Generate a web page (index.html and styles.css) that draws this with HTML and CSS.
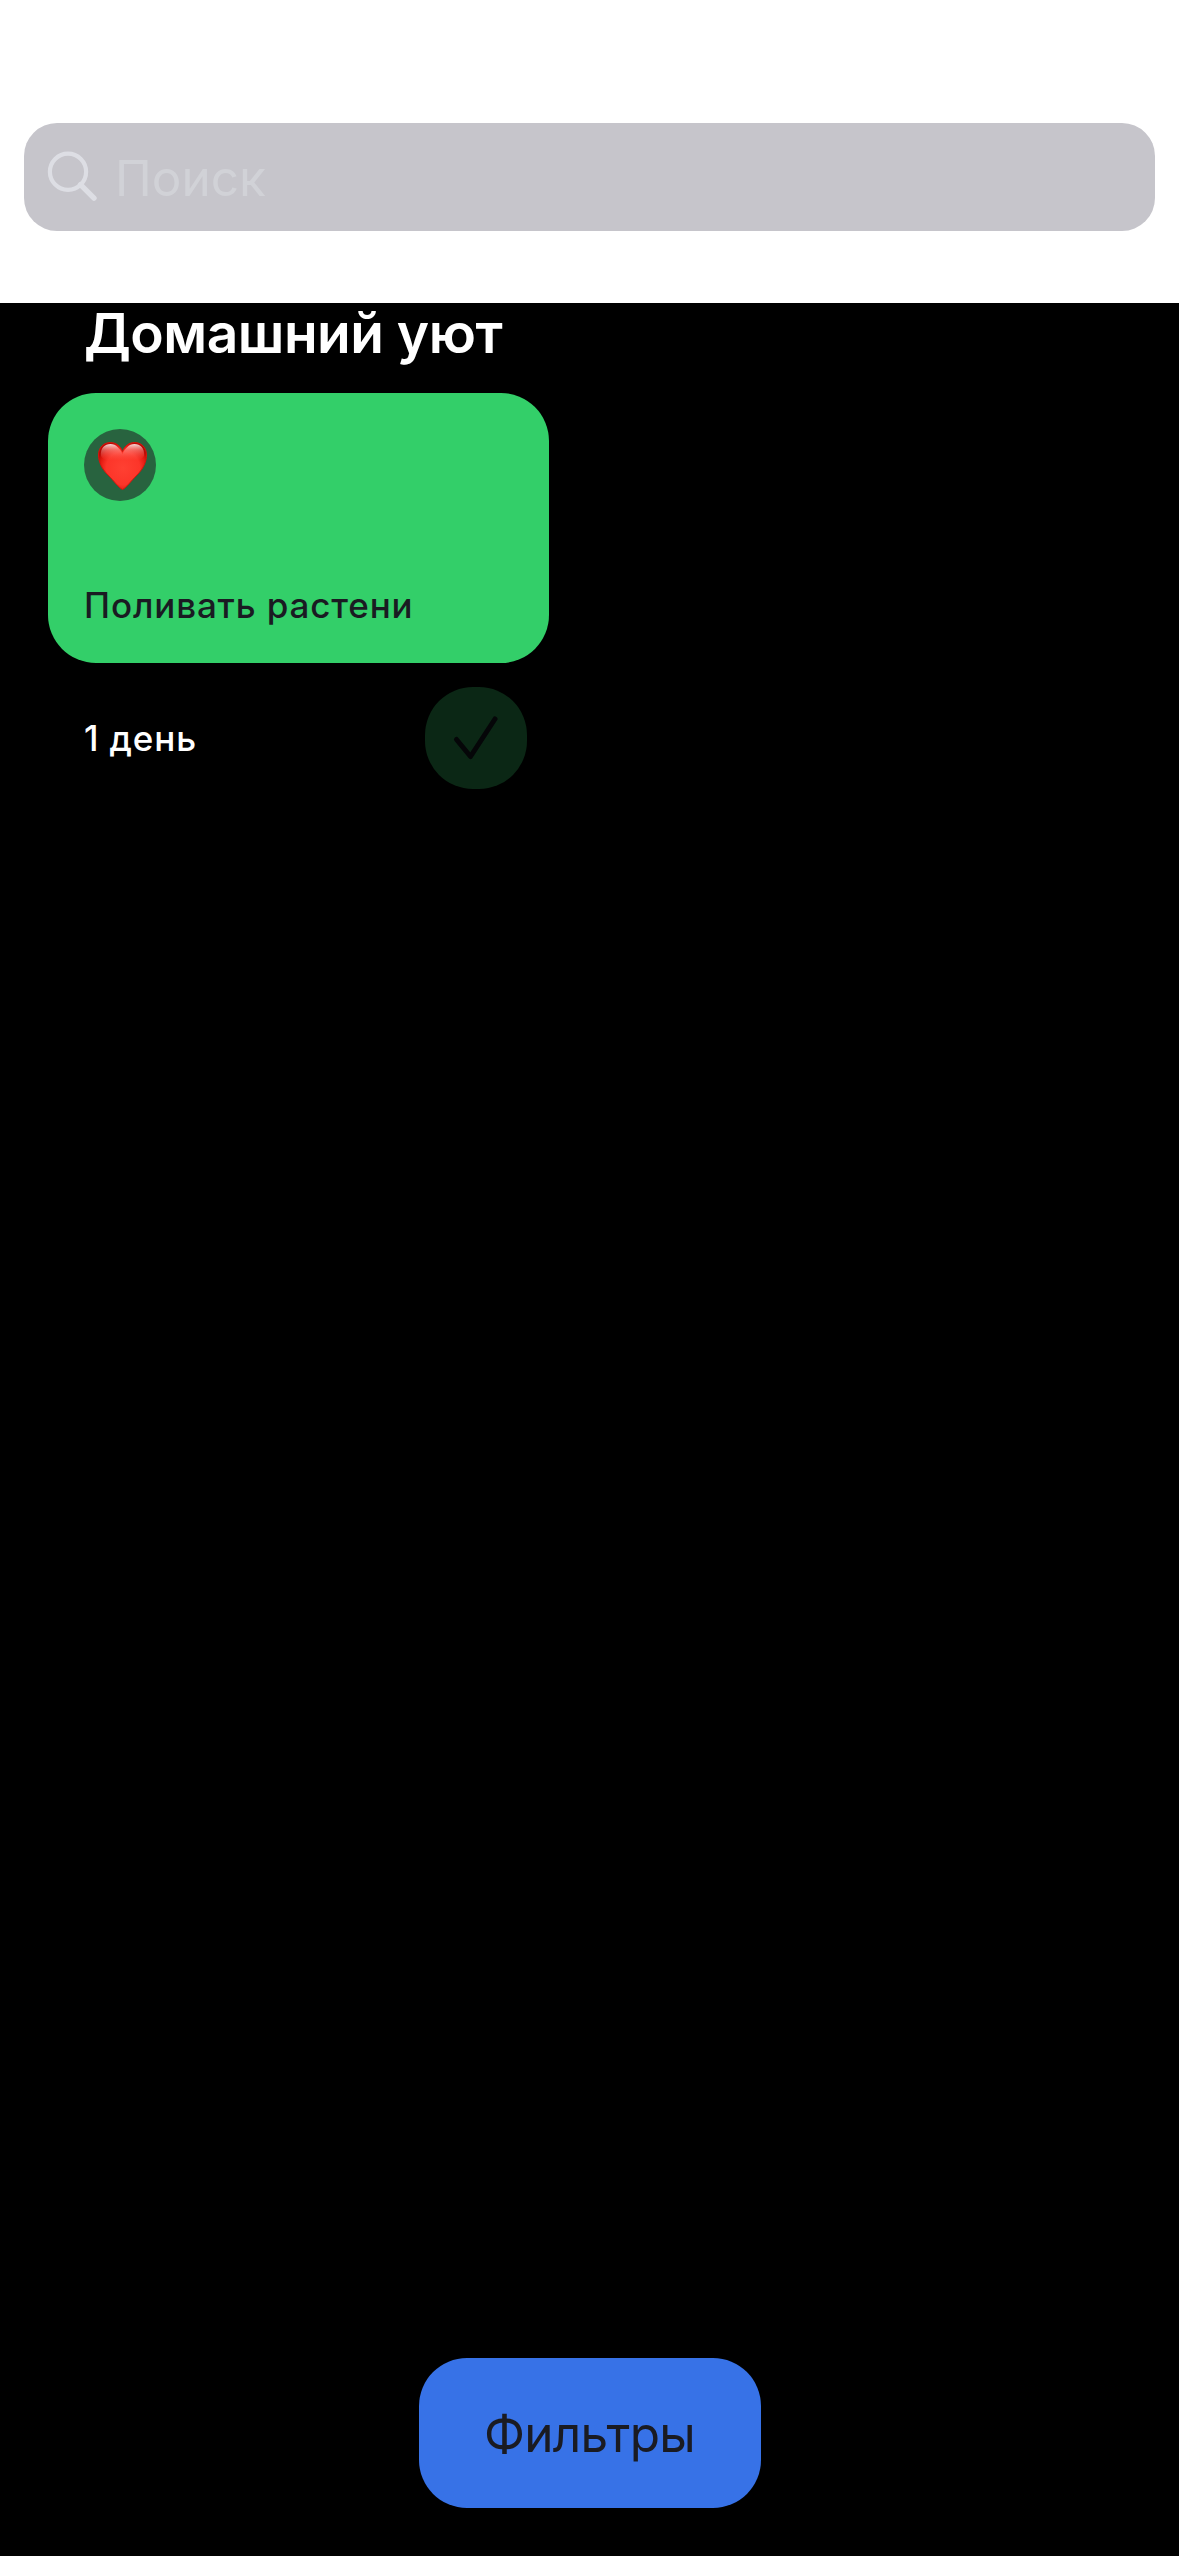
FILE: index.html
```html
<!DOCTYPE html>
<html lang="ru">
<head>
<meta charset="utf-8">
<title>Трекеры</title>
<link rel="stylesheet" href="styles.css">
</head>
<body>
<main class="screen">
  <header class="top">
    <div class="search">
      <svg class="search-icon" width="52" height="52" viewBox="0 0 52 52" fill="none" stroke="#dddee4" stroke-linecap="round">
        <circle cx="21" cy="20.700" r="18.100" stroke-width="4.200"/>
        <path d="M33.500 33.700 47 47.200" stroke-width="5.400"/>
      </svg>
      <span class="placeholder">Поиск</span>
    </div>
  </header>
  <section class="category">
    <h1 class="category-title">Домашний уют</h1>
    <article class="tracker">
      <div class="card">
        <div class="emoji">
          <svg width="50" height="50" viewBox="0 0 50 50">
            <defs>
              <radialGradient id="body" gradientUnits="userSpaceOnUse" cx="26" cy="27" r="27">
                <stop offset="0" stop-color="#ff4032"/>
                <stop offset="0.62" stop-color="#fc3529"/>
                <stop offset="0.85" stop-color="#e31a10"/>
                <stop offset="1" stop-color="#b80a04"/>
              </radialGradient>
              <linearGradient id="shine" x1="0" y1="0" x2="0" y2="1">
                <stop offset="0" stop-color="#fff" stop-opacity="0.85"/>
                <stop offset="0.35" stop-color="#ffb0aa" stop-opacity="0.5"/>
                <stop offset="1" stop-color="#ff5a50" stop-opacity="0"/>
              </linearGradient>
            </defs>
            <path d="M25.500 48.500C22 47 17 40 11 34C5 28 1.500 21 1.500 14C1.500 6 7 1.500 13.500 1.500C19 1.500 23.500 5 25.500 10.500C27.500 5 32 1.500 37.500 1.500C44 1.500 49.500 6 49.500 14C49.500 21 46 28 40 34C34 40 29 47 25.500 48.500Z" fill="url(#body)" stroke="#d8140c" stroke-width="1"/>
            <path d="M4 15C3 7 8 3 13.500 3C19 3 23.500 8 25.500 13C27.500 8 32 3 37.500 3C43 3 48 7 47 15C43 22 31 19 25.500 19C19 19 8 22 4 15Z" fill="url(#shine)"/>
          </svg>
        </div>
        <p class="card-title">Поливать растени</p>
      </div>
      <div class="footer">
        <span class="days">1 день</span>
        <button class="done" aria-label="Выполнено">
          <svg width="102" height="102" viewBox="0 0 102 102" fill="none" stroke="#050608" stroke-width="5" stroke-linecap="round" stroke-linejoin="round">
            <path d="M31.500 52.500 45.500 69.500 70 32"/>
          </svg>
        </button>
      </div>
    </article>
  </section>
  <button class="filters">Фильтры</button>
</main>
</body>
</html>
```
FILE: styles.css
```css
* { box-sizing: border-box; }
body { margin: 0; background: #000; font-family: Inter, "Noto Sans", sans-serif; }
button { border: 0; padding: 0; font: inherit; }
.screen { display: flex; flex-direction: column; align-items: stretch; height: 2556px; padding-bottom: 48px; overflow: hidden; }
.top { height: 303px; padding: 123px 24px 0; background: #fff; }
.search { display: flex; align-items: center; height: 108px; padding-left: 23px; border-radius: 33px; background: #c6c5cb; }
.search-icon { flex: none; margin-right: 16px; }
.placeholder { padding-top: 2px; font-size: 49.5px; line-height: 60px; color: #d1d2d7; }
.category { flex: 1; padding: 0 48px; }
.category-title { margin: 0; height: 90px; padding-left: 36px; font-size: 55px; line-height: 60px; font-weight: 600; letter-spacing: -0.5px; color: #fff; white-space: nowrap; }
.tracker { width: 501px; }
.card { display: flex; flex-direction: column; justify-content: space-between; height: 270px; padding: 36px 36px 37px; border-radius: 48px; background: #33cf69; }
.emoji { width: 72px; height: 72px; padding: 12px 0 0 13px; border-radius: 50%; background: #28633f; }
.emoji svg { display: block; }
.card-title { margin: 0; font-size: 35px; line-height: 42px; font-weight: 500; letter-spacing: 0.85px; color: #1a1b22; white-space: nowrap; }
.footer { display: flex; align-items: center; justify-content: space-between; padding: 24px 22px 0 36px; }
.days { font-size: 35px; line-height: 42px; font-weight: 500; letter-spacing: 0.85px; color: #fff; }
.done { width: 102px; height: 102px; border-radius: 48px; background: #0b2715; }
.done svg { display: block; }
.filters { align-self: center; width: 342px; height: 150px; padding-top: 2px; border-radius: 48px; background: #3772e7; font-size: 49.5px; letter-spacing: -0.7px; color: #1a1b22; }
```
